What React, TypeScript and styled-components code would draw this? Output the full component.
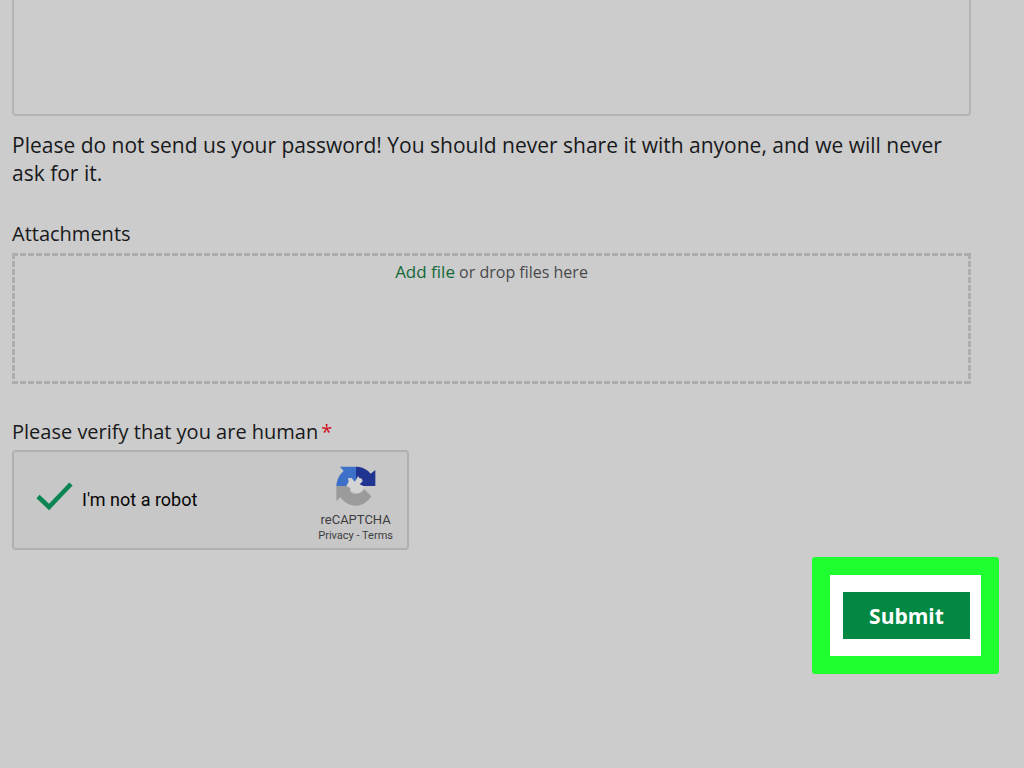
import React from "react";
import styled, { createGlobalStyle } from "styled-components";

const GlobalStyle = createGlobalStyle`
  *, *::before, *::after { box-sizing: border-box; }
  html, body { margin: 0; background: #cccccc; }
  body { font-family: "Open Sans", "Noto Sans", sans-serif; color: #18191b; }
`;

const Form = styled.form`
  display: flex;
  flex-direction: column;
  padding-bottom: 92px;
`;

const Fields = styled.div`
  display: flex;
  flex-direction: column;
  padding: 0 53px 0 12px;
`;

const Message = styled.textarea`
  display: block;
  width: 100%;
  height: 116px;
  padding: 12px;
  border: 2px solid #b4b4b4;
  border-top: 0;
  border-radius: 0 0 4px 4px;
  background: transparent;
  font: inherit;
  resize: none;
  outline: none;
`;

const Hint = styled.p`
  margin: 15px 0 33px;
  font-size: 21px;
  line-height: 28px;
`;

const Label = styled.label`
  font-size: 20px;
  line-height: 28px;
  margin-bottom: 5px;
`;

const GroupLabel = styled.span`
  font-size: 20px;
  line-height: 28px;
  margin-bottom: 4px;
`;

const Required = styled.span`
  margin-left: 3px;
  color: #d0101c;
`;

const dashX = "linear-gradient(to right, #adadad 6px, transparent 6px)";
const dashY = "linear-gradient(to bottom, #adadad 6px, transparent 6px)";

const DropZone = styled.div`
  height: 131px;
  margin-bottom: 34px;
  padding-top: 7px;
  text-align: center;
  font-size: 16px;
  line-height: 24px;
  color: #49494b;
  background-image: ${dashX}, ${dashX}, ${dashY}, ${dashY};
  background-position: left top, left bottom, left top, right top;
  background-size: 8px 3px, 8px 3px, 3px 8px, 3px 8px;
  background-repeat: repeat-x, repeat-x, repeat-y, repeat-y;
`;

const AddFile = styled.button`
  padding: 0;
  border: 0;
  background: none;
  font: inherit;
  font-size: 17px;
  color: #146838;
  cursor: pointer;
`;

const Captcha = styled.div`
  display: flex;
  align-items: center;
  justify-content: space-between;
  width: 397px;
  max-width: 100%;
  height: 100px;
  padding: 0 14px 0 22px;
  border: 2px solid #b0b0b0;
  border-radius: 4px;
  background: #c7c7c7;
`;

const CheckLabel = styled.label`
  display: flex;
  align-items: center;
  gap: 9px;
  font-family: Roboto, sans-serif;
  font-size: 18px;
  line-height: 24px;
  color: #050505;
`;

const Check = styled.input`
  appearance: none;
  width: 37px;
  height: 36px;
  margin: 0;
`;

const CheckBox = styled.span`
  display: grid;
  height: 36px;

  > * { grid-area: 1 / 1; }
  > svg { pointer-events: none; }
`;

const Brand = styled.div`
  display: flex;
  flex-direction: column;
  align-items: center;
  padding-top: 8px;
  font-family: Roboto, sans-serif;
  color: #3d3d3f;
`;

const BrandName = styled.span`
  margin-top: 5px;
  font-size: 13px;
  line-height: 17px;
`;

const BrandLinks = styled.span`
  font-size: 11px;
  line-height: 15px;

  a { color: inherit; text-decoration: none; }
`;

const Actions = styled.div`
  display: flex;
  justify-content: flex-end;
  margin-top: 7px;
  padding-right: 25px;
`;

const Highlight = styled.div`
  padding: 17px 11px 17px 13px;
  border: 18px solid #1fff2f;
  border-radius: 3px;
  background: #ffffff;
`;

const Submit = styled.button`
  display: block;
  width: 127px;
  height: 47px;
  padding: 0;
  border: 0;
  background: #038844;
  color: #ffffff;
  font: inherit;
  font-size: 21px;
  font-weight: 700;
  cursor: pointer;
`;

const CheckIcon = () => (
  <svg width="37" height="36" viewBox="0 0 37 36" aria-hidden="true">
    <path d="M2 14.5 L13 25 L35 2" fill="none" stroke="#0c8554" strokeWidth="4.6" />
  </svg>
);

const RecaptchaLogo = () => (
  <svg width="40" height="40" viewBox="0 0 120 120" aria-hidden="true">
    <path fill="#d4d4d4" d="M60 30 L78 34 L80 46 L72 55 L86 62 L70 82 L48 76 L30 60 L36 34 Z" />
    <path
      fill="#3d70c8"
      d="M12 2 H60 V42 L56 47 L47 36 L36 37 L38 47 L31 60 H1 C2 42 10 26 23 15 Z"
    />
    <path
      fill="#1f3590"
      d="M60 2 C78 2 94 10 104 23 L118 12 V60 H82 L71 55 L80 46 L78 38 L70 36 L66 30 L60 42 Z"
    />
    <path
      fill="#9b9b9b"
      d="M1 60 H31 L43 66 L42 74 C47 82 56 85 64 83 C73 82 80 77 85 70 L106 91 C95 109 78 119 59 119 C40 119 24 109 13 94 L1 106 Z"
    />
  </svg>
);

export default function App() {
  return (
    <>
      <GlobalStyle />
      <Form onSubmit={(e: React.FormEvent) => e.preventDefault()}>
        <Fields>
          <Message aria-label="Message" />
          <Hint>
            Please do not send us your password! You should never share it with anyone, and we will
            never ask for it.
          </Hint>
          <Label htmlFor="add-file">Attachments</Label>
          <DropZone>
            <AddFile id="add-file" type="button">Add file</AddFile> or drop files here
          </DropZone>
          <GroupLabel>
            Please verify that you are human<Required>*</Required>
          </GroupLabel>
          <Captcha>
            <CheckLabel>
              <CheckBox>
                <Check type="checkbox" defaultChecked />
                <CheckIcon />
              </CheckBox>
              I'm not a robot
            </CheckLabel>
            <Brand>
              <RecaptchaLogo />
              <BrandName>reCAPTCHA</BrandName>
              <BrandLinks>
                <a href="#privacy">Privacy</a> - <a href="#terms">Terms</a>
              </BrandLinks>
            </Brand>
          </Captcha>
        </Fields>
        <Actions>
          <Highlight>
            <Submit type="submit">Submit</Submit>
          </Highlight>
        </Actions>
      </Form>
    </>
  );
}
